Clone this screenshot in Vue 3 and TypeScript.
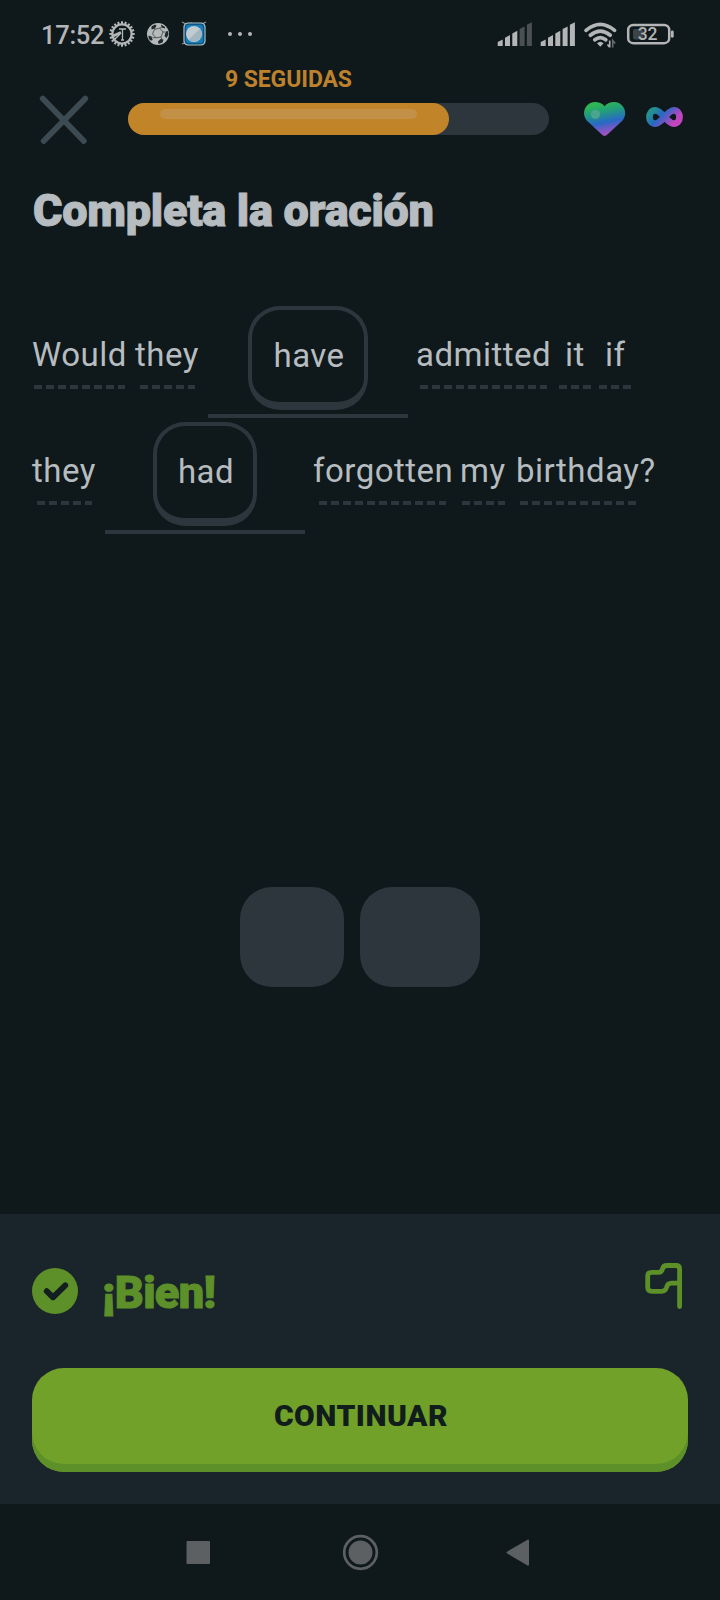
<script setup lang="ts">
interface Word {
  kind: 'word'
  text: string
  gap: number
  width: number
  dashStart: number
  dashWidth: number
}
interface Blank {
  kind: 'blank'
  text: string
  gap: number
  width: number
  chipWidth: number
}
type Token = Word | Blank

const word = (text: string, gap: number, width: number, dashStart: number, dashWidth: number): Word => ({
  kind: 'word', text, gap, width, dashStart, dashWidth,
})
const blank = (text: string, gap: number, chipWidth: number): Blank => ({
  kind: 'blank', text, gap, width: 200, chipWidth,
})

const lines: Token[][] = [
  [
    word('Would', 0, 93, 2, 91),
    word('they', 10, 65, 5, 55),
    blank('have', 8, 120),
    word('admitted', 8, 134, 4, 127),
    word('it', 15, 20, -6, 32),
    word('if', 20, 22, -6, 32),
  ],
  [
    word('they', 0, 65, 5, 55),
    blank('had', 8, 104),
    word('forgotten', 8, 138, 6, 127),
    word('my', 9, 46, 2, 43),
    word('birthday?', 10, 140, 4, 116),
  ],
]

const options = [104, 120]
const bars = [0, 1, 2, 3, 4]
const barPoints = (i: number, x0: number): string => {
  const x = x0 + i * 7.3
  const top = 42 - i * 4.3
  return `${x},46 ${x},${top} ${x + 5},${top - 2.6} ${x + 5},46`
}
const teeth = Array.from({ length: 20 }, (_, i) => i * 18)
const px = (n: number): string => `${n}px`
</script>

<template>
  <main class="screen">
    <header class="status">
      <span class="clock">17:52</span>
      <svg class="notices" width="150" height="60" viewBox="106 0 150 60">
        <g stroke="#b3b6b7" fill="none">
          <circle cx="122" cy="34" r="9.6" stroke-width="2.2" />
          <path v-for="a in teeth" :key="a" d="M122 21.3V24.5" stroke-width="2" :transform="`rotate(${a} 122 34)`" />
          <path d="M119 29h7M122.5 29v11M121 40h3" stroke-width="1.3" />
          <path d="M113 36l8-3.500" stroke-width="3" />
          <path d="M114 40l6-6" stroke-width="1.500" />
        </g>
        <circle cx="158" cy="34" r="11" fill="#b6b9ba" />
        <g fill="#20292c">
          <path d="M151.500 26.500l3.500-2 1.500 1-1.500 3-3.500 1zM161 24.500l4 2.500v1.500l-3.500-1zM165.800 31.500l2-.5.700 3.500-2 3.500-2-2zM160.500 39l3 .5-1 3-4 1.500-.5-2.500zM148.500 35.500l3 1 1.200 3.500-1.700.8-2.200-2z" />
          <path d="M154.500 29.500l5-1.500 3.500 4-2 5-5 .8-3.500-3.800zM155 28l-.5 1.500M161.500 27.500l-2 .500M165 32h-2M162 39.500l-1-2.500M152.500 37.500l3.500.3" fill="none" stroke="#4b5355" stroke-width=".9" />
        </g>
        <path d="M182 22l4 2 6-1M206 22l-4 2M182 44l5-2" stroke="#929799" stroke-width="1.200" fill="none" />
        <rect x="184" y="23" width="21" height="22" rx="4" fill="#147dbd" stroke="#b9c2c5" stroke-width="1.200" />
        <rect x="185.200" y="24.200" width="18.600" height="19.600" rx="3.500" fill="none" stroke="#183645" stroke-width=".8" />
        <circle cx="194" cy="34" r="8" fill="#c2cbd0" />
        <path d="M188.500 39.800L200 28.800A8 8 0 0 1 188.500 39.800z" fill="#a2b6c2" />
        <g fill="#b3b6b7">
          <circle cx="230" cy="34" r="2" /><circle cx="240" cy="34" r="2" /><circle cx="250" cy="34" r="2" />
        </g>
      </svg>
      <svg class="signals" width="190" height="60" viewBox="494 0 190 60">
        <polygon v-for="i in bars" :key="`a${i}`" :points="barPoints(i, 497.7)" :fill="i > 2 ? '#4b5153' : '#b3b5b6'" />
        <polygon v-for="i in bars" :key="`b${i}`" :points="barPoints(i, 540.7)" fill="#b3b5b6" />
        <g fill="none" stroke="#b3b5b6" stroke-width="3.700" stroke-linecap="round">
          <path d="M586 30.300Q600.300 18.300 614.600 30.300" />
          <path d="M590.300 35.200Q600.300 27 610.300 35.200" />
          <path d="M594.800 39.800Q600.300 35.500 605.800 39.800" />
        </g>
        <path d="M597 43.200Q600.300 40.200 603.600 43.200L600.300 46.800z" fill="#b3b5b6" />
        <path d="M609.700 40.500v7M607.500 44.500l2 2.500" stroke="#b3b5b6" stroke-width="1.600" fill="none" />
        <path d="M612.700 47.500v-7l2.500 3" stroke="#666c6e" stroke-width="1.600" fill="none" />
        <rect x="628.200" y="25" width="41" height="18.200" rx="5" fill="none" stroke="#b3b5b6" stroke-width="2.500" />
        <rect x="633" y="29" width="10.500" height="10.500" rx="2" fill="#3c4447" />
        <path d="M672.300 31.800v4.500" stroke="#b3b5b6" stroke-width="2.800" stroke-linecap="round" />
        <text x="637.800" y="40.300" class="battery">32</text>
      </svg>
    </header>

    <section class="lesson">
      <svg class="close" width="50" height="50" viewBox="39 94 50 50">
        <path d="M42.700 98.600L83.800 141M85.300 98.600L43.700 141" stroke="#3c4a52" stroke-width="5.800" stroke-linecap="round" />
      </svg>
      <div class="progress">
        <div class="streak">9 SEGUIDAS</div>
        <div class="track"><div class="fill"><div class="shine"></div></div></div>
      </div>
      <svg class="lives" width="104" height="40" viewBox="582 98 104 40">
        <defs>
          <linearGradient id="heart" x1=".35" y1="0" x2=".6" y2="1">
            <stop offset="0.050" stop-color="#2eb852" /><stop offset=".3" stop-color="#229b7e" />
            <stop offset=".6" stop-color="#2869c6" /><stop offset=".8" stop-color="#755ac4" />
            <stop offset="1" stop-color="#b44bc0" />
          </linearGradient>
          <linearGradient id="loop" x1="0" y1="0.300" x2="1" y2=".7">
            <stop offset="0" stop-color="#24908f" /><stop offset=".35" stop-color="#2868c4" />
            <stop offset=".65" stop-color="#7955c3" /><stop offset=".9" stop-color="#c145bd" />
          </linearGradient>
        </defs>
        <path d="M604.600 106.300C599 100 589.500 101.200 585.700 107.200C582.800 112 584 118 587.800 121.500L601.800 134.600Q604.600 137.200 607.400 134.600L621.500 121.500C625.400 118 626.400 112 623.500 107.200C619.700 101.200 610.200 100 604.600 106.300Z" fill="url(#heart)" />
        <circle cx="595.400" cy="114.300" r="4.600" fill="#4aa58e" />
        <path d="M664.500 117C660 112 658 110.400 655.200 110.400C647.600 110.400 647.600 123.600 655.200 123.600C658 123.600 660 122 664.500 117C669 112 671 110.400 673.800 110.400C681.400 110.400 681.400 123.600 673.800 123.600C671 123.600 669 122 664.500 117Z" fill="none" stroke="url(#loop)" stroke-width="6.800" stroke-linejoin="round" />
      </svg>
    </section>

    <h1 class="title">Completa la oración</h1>

    <section class="sentence">
      <div v-for="(line, l) in lines" :key="l" class="line">
        <template v-for="(t, i) in line" :key="i">
          <div v-if="t.kind === 'word'" class="word" :style="{ marginLeft: px(t.gap), width: px(t.width) }">
            <span class="label">{{ t.text }}</span>
            <span class="dashes" :style="{ marginLeft: px(t.dashStart), width: px(t.dashWidth) }"></span>
          </div>
          <div v-else class="blank" :style="{ marginLeft: px(t.gap), width: px(t.width) }">
            <div class="chip" :style="{ width: px(t.chipWidth) }">{{ t.text }}</div>
          </div>
        </template>
      </div>
    </section>

    <section class="options">
      <div v-for="w in options" :key="w" class="option" :style="{ width: px(w) }"></div>
    </section>

    <section class="result">
      <div class="verdict">
        <svg width="46" height="46" viewBox="0 0 46 46">
          <circle cx="23" cy="23" r="23" fill="#5d9029" />
          <path d="M14.700 23.200L21 29.300L33.300 17.300" fill="none" stroke="#121e20" stroke-width="5.800" stroke-linecap="round" stroke-linejoin="round" />
        </svg>
        <strong class="praise">¡Bien!</strong>
        <svg class="flag" width="40" height="48" viewBox="644 1262 40 48">
          <path d="M679.600 1306.500V1269Q679.600 1265.500 676 1265.500H667Q663.200 1265.500 662.500 1269Q661.800 1272.300 658.500 1272.300H652Q647.700 1272.300 647.700 1276V1287Q647.700 1291.300 652 1291.300H661.500Q665.500 1291.300 666.500 1287.500Q667.500 1283.200 671.500 1283.200H679.600" fill="none" stroke="#5d9029" stroke-width="4.800" stroke-linecap="round" stroke-linejoin="round" />
        </svg>
      </div>
      <button class="continue" type="button">CONTINUAR</button>
    </section>

    <nav class="system">
      <svg width="720" height="96" viewBox="0 1504 720 96" fill="#5c6062">
        <rect x="186.500" y="1541" width="23.500" height="23" rx="1" />
        <circle cx="360.500" cy="1552.500" r="12" />
        <circle cx="360.500" cy="1552.500" r="16.300" fill="none" stroke="#5c6062" stroke-width="2.700" />
        <path d="M507.500 1552.500L528 1540.500V1564.700Z" stroke="#5c6062" stroke-width="2" stroke-linejoin="round" />
      </svg>
    </nav>
  </main>
</template>

<style>
body { background: #0f181b; }
</style>

<style scoped>
.screen {
  width: 720px;
  height: 1600px;
  display: flex;
  flex-direction: column;
  overflow: hidden;
  background: #0f181b;
  color: #b6bcbf;
  font-family: Roboto, "Open Sans", sans-serif;
}
svg { display: block; flex: none; }
.status { display: flex; height: 60px; }
.clock {
  width: 65px;
  padding: 19px 0 0 41px;
  font-size: 25.5px;
  line-height: 32px;
  font-weight: 500;
  letter-spacing: -.3px;
  color: #b3b5b6;
}
.signals { margin-left: auto; margin-right: 36px; }
.battery { font: 500 17.5px Roboto, sans-serif; fill: #b3b5b6; letter-spacing: -.3px; }
.lesson { display: flex; height: 90px; }
.close { margin: 34px 39px 0 39px; }
.progress { width: 421px; }
.streak {
  height: 33px;
  margin-top: 5px;
  text-indent: 97px;
  line-height: 30px;
  font-size: 23px;
  font-weight: 700;
  color: #be812c;
  letter-spacing: -.1px;
  white-space: nowrap;
}
.track { height: 32px; margin-top: 5px; border-radius: 16px; background: #2c363c; }
.fill { width: 321px; height: 32px; border-radius: 16px; background: #c28428; display: flex; }
.shine { width: 257px; height: 10px; margin: 6px 0 0 32px; border-radius: 5px; background: #c29047; }
.lives { margin: 38px 0 0 33px; }
.title {
  margin: 33px 0 0 33px;
  height: 55px;
  line-height: 56px;
  font-size: 45px;
  font-weight: 900;
  letter-spacing: -.28px;
  -webkit-text-stroke: 1px currentColor;
  white-space: nowrap;
}
.sentence { margin: 68px 0 0 32px; }
.line { display: flex; height: 116px; }
.word { flex: none; padding-top: 29px; font-size: 33px; line-height: 40px; letter-spacing: .5px; }
.label { display: block; height: 40px; white-space: nowrap; }
.dashes {
  display: block;
  height: 4px;
  margin-top: 10px;
  background: repeating-linear-gradient(90deg, #2c363c 0 8px, transparent 8px 12px);
}
.blank {
  flex: none;
  box-sizing: border-box;
  height: 112px;
  border-bottom: 4px solid #2c363c;
}
.chip {
  box-sizing: border-box;
  height: 104px;
  margin: 0 auto;
  padding: 26px 0 0 2px;
  border: 4px solid #2c363c;
  border-bottom-width: 8px;
  border-radius: 32px;
  text-align: center;
  font-size: 33px;
  line-height: 40px;
  letter-spacing: .4px;
}
.options { display: flex; justify-content: center; gap: 16px; margin-top: 349px; }
.option { height: 100px; border-radius: 32px; background: #2c363c; }
.result {
  box-sizing: border-box;
  height: 290px;
  margin-top: auto;
  padding: 48px 32px 0;
  background: #1a252b;
}
.verdict { display: flex; height: 106px; padding-top: 6px; box-sizing: border-box; }
.praise {
  margin-left: 24px;
  line-height: 50px;
  font-size: 45px;
  font-weight: 900;
  letter-spacing: -.7px;
  -webkit-text-stroke: 1px currentColor;
  color: #5d9029;
}
.flag { margin: -6px 4px 0 auto; }
.continue {
  display: block;
  width: 656px;
  height: 104px;
  padding: 0 0 10px 2px;
  border: 0;
  border-radius: 32px;
  background: #72a129;
  box-shadow: inset 0 -8px #5d9029;
  color: #101d1c;
  font: 900 30px Roboto, sans-serif;
  letter-spacing: .5px;
}
.system { height: 96px; }
</style>
